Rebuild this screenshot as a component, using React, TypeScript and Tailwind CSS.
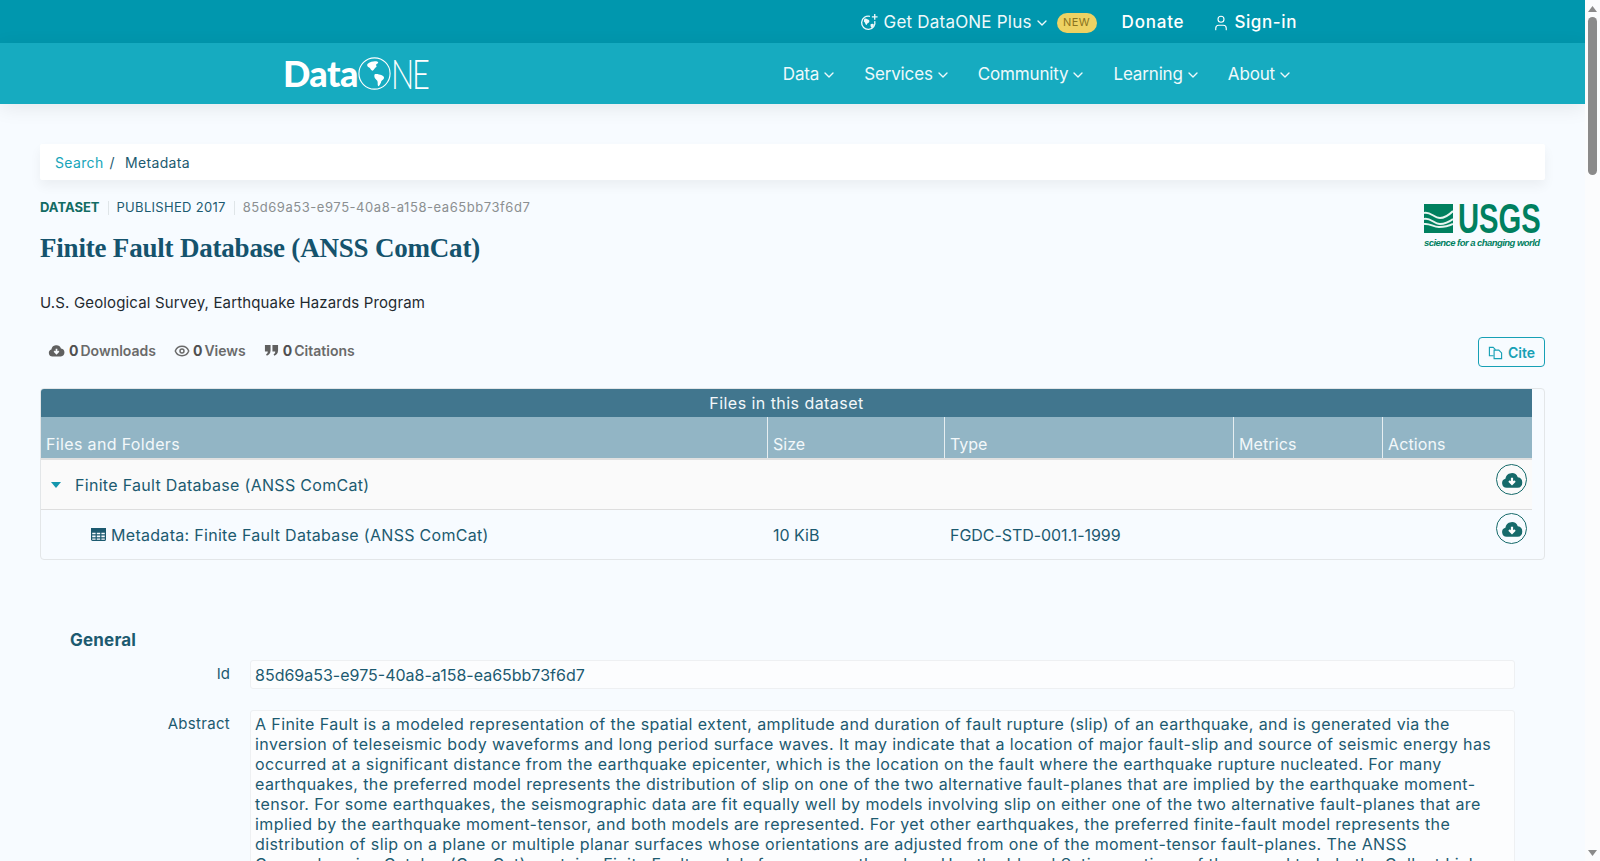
import { ChevronDown, User, Eye } from "lucide-react";

const sans = "font-['Inter','Noto_Sans',sans-serif]";

function DataOneLogo() {
  return (
    <div className="flex h-[40px] items-center pb-[3px] text-white">
      <span className="font-['Lato',sans-serif] text-[36px] font-black leading-none tracking-[-0.6px]">Data</span>
      <svg viewBox="0 0 36 36" className="h-[33px] w-[33px] shrink-0">
        <circle cx="18" cy="18" r="17" fill="none" stroke="#fff" strokeWidth="1.2" />
        <path d="M11 7c3-2 7-3 10-2 2 1 1 2-1 3-1 1 1 2 0 3-2 1-2 3-4 4-1 0-2-1-3-3-1-1-3-1-3-3 0-1 0-1 1-2z" fill="#fff" />
        <path d="M18 19c2-1 5 0 8 1 2 1 3 2 2 4-1 1-3 2-3 4-1 2-2 4-3 4-1-2 0-4-1-6-1-2-4-3-3-7z" fill="#fff" />
      </svg>
      <div className="w-[37px]">
        <span className="block origin-left font-['Lato',sans-serif] text-[41px] font-light leading-none tracking-[-3px] [transform:scaleX(0.75)]">NE</span>
      </div>
    </div>
  );
}

function UsgsLogo() {
  return (
    <div className="flex w-[116px] flex-col text-[#00805f]">
      <div className="flex h-[30px] items-center gap-[5px]">
        <svg viewBox="0 0 29 29" className="h-[29px] w-[29px] shrink-0">
          <rect width="29" height="29" fill="#00805f" />
          <path d="M0 9c6-2 10 5 16 5 5 0 9-3 13-7M0 15c6-2 10 5 16 5 5 0 9-2 13-5M0 20c6-1 9 3 15 3 5 0 10-1 14-3" fill="none" stroke="#e8f5f0" strokeWidth="2" />
        </svg>
        <div className="w-[82px]">
          <span className="block origin-left whitespace-nowrap font-['Liberation_Sans',sans-serif] text-[43px] font-bold leading-[30px] [transform:scaleX(0.68)]">USGS</span>
        </div>
      </div>
      <span className="mt-[5px] whitespace-nowrap font-['Liberation_Sans',sans-serif] text-[9.5px] font-bold italic leading-[10px] tracking-[-0.55px]">science for a changing world</span>
    </div>
  );
}

function CloudIcon({ className, color, arrow }: { className: string; color: string; arrow: string }) {
  return (
    <svg viewBox="0 0 24 24" className={className}>
      <path d="M6.200 20.500A5 5 0 0 1 4.800 10.700 7 7 0 0 1 18.300 9 5.800 5.800 0 0 1 18 20.500z" fill={color} />
      <path d="M12 9.500v6.500M8.800 13l3.200 3.200 3.200-3.200" fill="none" stroke={arrow} strokeWidth="2.400" />
    </svg>
  );
}

function NavItem({ label }: { label: string }) {
  return (
    <span className="flex items-center gap-[2px] text-[17px] tracking-[-0.15px] text-[#eef9fb]">
      {label}
      <ChevronDown className="h-[16px] w-[16px]" strokeWidth={2} />
    </span>
  );
}

function HeaderCell({ label, className }: { label: string; className: string }) {
  return <div className={`flex items-end px-[5px] pb-[2px] text-[16px] text-[#f3f8fa] ${className}`}>{label}</div>;
}

function DownloadButton() {
  return (
    <span className="flex h-[31px] w-[31px] items-center justify-center rounded-full border border-[#166a6a]">
      <CloudIcon className="h-[22px] w-[22px]" color="#166a6a" arrow="#fff" />
    </span>
  );
}

const abstractLines = [
  "A Finite Fault is a modeled representation of the spatial extent, amplitude and duration of fault rupture (slip) of an earthquake, and is generated via the",
  "inversion of teleseismic body waveforms and long period surface waves. It may indicate that a location of major fault-slip and source of seismic energy has",
  "occurred at a significant distance from the earthquake epicenter, which is the location on the fault where the earthquake rupture nucleated. For many",
  "earthquakes, the preferred model represents the distribution of slip on one of the two alternative fault-planes that are implied by the earthquake moment-",
  "tensor. For some earthquakes, the seismographic data are fit equally well by models involving slip on either one of the two alternative fault-planes that are",
  "implied by the earthquake moment-tensor, and both models are represented. For yet other earthquakes, the preferred finite-fault model represents the",
  "distribution of slip on a plane or multiple planar surfaces whose orientations are adjusted from one of the moment-tensor fault-planes. The ANSS",
  "Comprehensive Catalog (ComCat) contains Finite Fault models for many earthquakes. Use the Id and Setion sections of the record to help the Collect Link",
];

export default function App() {
  return (
    <div className={`flex h-screen overflow-hidden bg-[#f7fbff] ${sans}`}>
      <div className="min-w-0 flex-1 overflow-hidden">
        <div className="flex h-[43px] items-center justify-end bg-[#0097ae] pr-[288px] pt-[2px] text-white">
          <span className="flex items-center text-[17px] tracking-[0.2px] text-[#eef9fb]">
            <svg viewBox="0 0 20 20" className="mr-[5px] h-[19px] w-[19px]" fill="none" stroke="currentColor" strokeWidth="1.400">
              <path d="M15.500 8.500a7 7 0 1 1-5-5" />
              <path d="M4.500 6c2-1 3 .5 4.500 1s1 3-.5 3.500-1 2.500-2 2-1-3-2.500-3.500M11 12c1-1 3-1 3.500 0s-1 3-2 3.500-1.500-2.500-1.500-3.500z" fill="currentColor" stroke="none" />
              <path d="M15.500 1v6M12.500 4h6" />
            </svg>
            Get DataONE Plus
            <ChevronDown className="ml-[2px] h-[16px] w-[16px]" strokeWidth={2} />
          </span>
          <span className="ml-[7px] flex h-[20px] w-[40px] items-center justify-center rounded-full bg-[#eed263] text-[11px] tracking-[0.4px] text-[#8a7420]">NEW</span>
          <span className="ml-[25px] text-[17px] font-medium tracking-[0.8px]">Donate</span>
          <span className="ml-[28px] flex items-center gap-[4px] text-[17px] font-medium tracking-[0.6px]">
            <User className="h-[18px] w-[18px]" strokeWidth={1.500} />
            Sign-in
          </span>
        </div>
        <div className="relative flex h-[61px] items-center justify-between bg-[#16abc0] pl-[283px] pr-[292px] pt-[2px] shadow-[0_4px_20px_rgba(0,0,0,0.08)]">
          <DataOneLogo />
          <div className="flex items-center gap-[27px]">
            <NavItem label="Data" />
            <NavItem label="Services" />
            <NavItem label="Community" />
            <NavItem label="Learning" />
            <NavItem label="About" />
          </div>
        </div>
        <div className="px-[40px]">
          <div className="mt-[40px] flex h-[36px] items-center rounded-[2px] bg-white px-[15px] text-[14px] tracking-[0.35px] shadow-[0_6px_12px_rgba(0,0,0,0.05)]">
            <span className="text-[#16a5ba]">Search</span>
            <span className="ml-[6px] text-[#1c5a70]">/</span>
            <span className="ml-[10px] text-[#1c5a70]">Metadata</span>
          </div>
          <div className="flex justify-between">
            <div>
              <div className="mt-[20px] flex h-[16px] items-center text-[13px]">
                <span className="font-bold text-[#126b63]">DATASET</span>
                <span className="mx-[8px] h-[14px] w-px bg-[#dfe5e8]" />
                <span className="tracking-[0.3px] text-[#1c5a70]">PUBLISHED 2017</span>
                <span className="mx-[8px] h-[14px] w-px bg-[#dfe5e8]" />
                <span className="tracking-[0.55px] text-[#8b8f91]">85d69a53-e975-40a8-a158-ea65bb73f6d7</span>
              </div>
              <h1 className="mt-[15px] font-['Liberation_Serif',serif] text-[27px] font-bold leading-[34px] tracking-[-0.2px] text-[#15536d]">Finite Fault Database (ANSS ComCat)</h1>
            </div>
            <div className="mt-[23px] pr-[5px]">
              <UsgsLogo />
            </div>
          </div>
          <div className="mt-[28px] text-[15px] leading-[20px] tracking-[0.15px] text-[#1f2a30]">U.S. Geological Survey, Earthquake Hazards Program</div>
          <div className="mt-[22px] flex h-[32px] items-center justify-between">
            <div className="mb-[1px] flex items-center pl-[8px] text-[14px] font-semibold text-[#6a6a6a]">
              <CloudIcon className="h-[17px] w-[17px]" color="#606060" arrow="#f7fbff" />
              <span className="ml-[4px] font-bold text-[#505050]">0</span>
              <span className="ml-[2px]">Downloads</span>
              <Eye className="ml-[18px] h-[16px] w-[16px]" strokeWidth={2.200} />
              <span className="ml-[3px] font-bold text-[#505050]">0</span>
              <span className="ml-[2px]">Views</span>
              <svg viewBox="0 0 16 16" className="ml-[18px] h-[15px] w-[15px]" fill="#606060">
                <path d="M1 2h6v6c0 3-2 5-4 5.500l-.8-1.500c1.300-.5 1.800-1.500 1.800-3H1z" />
                <path d="M9 2h6v6c0 3-2 5-4 5.500l-.8-1.500c1.300-.5 1.800-1.500 1.800-3H9z" />
              </svg>
              <span className="ml-[4px] font-bold text-[#505050]">0</span>
              <span className="ml-[2px]">Citations</span>
            </div>
            <span className="mt-[2px] flex h-[30px] w-[67px] items-center justify-center gap-[5px] rounded-[4px] border border-[#16a0b5] text-[14px] font-semibold text-[#16a0b5]">
              <svg viewBox="0 0 16 16" className="h-[15px] w-[15px]" fill="none" stroke="currentColor" strokeWidth="1.200">
                <path d="M6 11.500H1.500v-9h4l2 2v1" />
                <path d="M6.500 5.500h5l3 3v6h-8z" />
              </svg>
              Cite
            </span>
          </div>
          <div className="mt-[21px] overflow-hidden rounded-[4px] border border-[#e3e6e8] pr-[12px]">
            <div className="flex h-[28px] items-center justify-center bg-[#41768e] text-[16px] tracking-[0.45px] text-[#f3f8fa]">Files in this dataset</div>
            <div className="flex h-[43px] divide-x divide-[#e6eef1] border-b-[2px] border-[#e0e0e0] bg-[#92b5c5]">
              <HeaderCell label="Files and Folders" className="w-[727px] tracking-[0.35px]" />
              <HeaderCell label="Size" className="w-[177px]" />
              <HeaderCell label="Type" className="w-[289px]" />
              <HeaderCell label="Metrics" className="w-[149px] tracking-[0.1px]" />
              <HeaderCell label="Actions" className="flex-1 tracking-[0.1px]" />
            </div>
            <div className="flex h-[50px] border-b border-[#dedede] bg-[#fafafa] text-[16px] text-[#1c5a70]">
              <div className="flex flex-1 items-center pl-[10px]">
                <svg viewBox="0 0 10 6" className="h-[6px] w-[10px]">
                  <path d="M0 0h10L5 6z" fill="#1496ad" />
                </svg>
                <span className="ml-[14px] tracking-[0.3px]">Finite Fault Database (ANSS ComCat)</span>
              </div>
              <div className="w-[36px] pt-[4px]"><DownloadButton /></div>
            </div>
            <div className="flex h-[49px] text-[16px] text-[#1c5a70]">
              <div className="flex w-[727px] items-center pl-[50px]">
                <svg viewBox="0 0 15 13" className="h-[13px] w-[15px]" fill="none" stroke="currentColor" strokeWidth="1.200">
                  <rect x="0.600" y="0.600" width="13.800" height="11.800" rx="1" />
                  <path d="M0.600 3.800h13.800M0.600 6.800h13.800M0.600 9.800h13.800M5.200 3.800v8.600M9.800 3.800v8.600" />
                  <path d="M0.600 0.600h13.800v3.200H0.600z" fill="currentColor" />
                </svg>
                <span className="ml-[5px] tracking-[0.3px]">Metadata: Finite Fault Database (ANSS ComCat)</span>
              </div>
              <div className="flex w-[177px] items-center px-[5px]">10 KiB</div>
              <div className="flex flex-1 items-center px-[5px] tracking-[-0.05px]">FGDC-STD-001.1-1999</div>
              <div className="w-[36px] pt-[3px]"><DownloadButton /></div>
            </div>
          </div>
          <div className="mt-[68px] pl-[30px] text-[17px] font-bold leading-[24px] tracking-[0.2px] text-[#1c5a70]">General</div>
          <div className="mt-[8px] flex">
            <div className="w-[190px] pt-[3px] text-right text-[15px] text-[#1c5a70]">Id</div>
            <div className="ml-[20px] mr-[30px] flex h-[29px] flex-1 items-center rounded-[3px] border border-[#eef0f2] bg-[#fcfdfe] px-[4px] text-[16px] text-[#1c5a70]">85d69a53-e975-40a8-a158-ea65bb73f6d7</div>
          </div>
          <div className="mt-[21px] flex">
            <div className="w-[190px] pt-[3px] text-right text-[15px] tracking-[0.3px] text-[#1c5a70]">Abstract</div>
            <div className="ml-[20px] mr-[30px] flex-1 rounded-[3px] border border-[#eef0f2] bg-[#fcfdfe] px-[4px] py-[3px] text-[16px] leading-[20px] tracking-[0.4px] text-[#1c5a70]">
              {abstractLines.map((line) => (
                <div key={line} className="whitespace-nowrap">{line}</div>
              ))}
            </div>
          </div>
        </div>
      </div>
      <div className="flex w-[15px] shrink-0 flex-col items-center bg-[#fbfcfd]">
        <svg viewBox="0 0 15 15" className="h-[17px] w-[15px] shrink-0"><path d="M3 11 7.500 5l4.500 6z" fill="#8a8a8a" /></svg>
        <div className="h-[158px] w-[9px] rounded-full bg-[#8a8a8a]" />
        <div className="flex-1" />
        <svg viewBox="0 0 15 15" className="h-[15px] w-[15px] shrink-0"><path d="M3 4h9l-4.500 6z" fill="#8a8a8a" /></svg>
      </div>
    </div>
  );
}
